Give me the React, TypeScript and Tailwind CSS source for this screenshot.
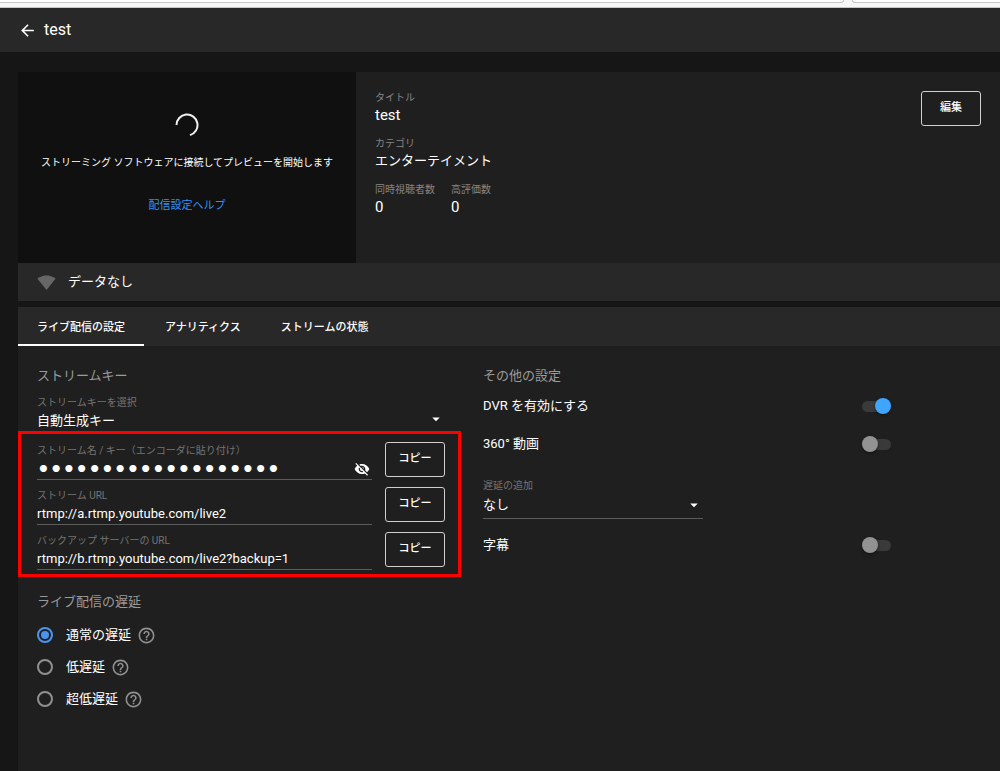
import { useState } from 'react';
import type { ReactNode } from 'react';
import {
  MdArrowBack,
  MdArrowDropDown,
  MdHelpOutline,
  MdSignalWifi4Bar,
  MdVisibilityOff,
} from 'react-icons/md';

const tabs = ['ライブ配信の設定', 'アナリティクス', 'ストリームの状態'];

const latencies = ['通常の遅延', '低遅延', '超低遅延'];

const streamFields = [
  { id: 'key', label: 'ストリーム名 / キー（エンコーダに貼り付け）', value: 'xxxx-xxxx-xxxx-xxxx', secret: true },
  { id: 'url', label: 'ストリーム URL', value: 'rtmp://a.rtmp.youtube.com/live2', secret: false },
  { id: 'backup', label: 'バックアップ サーバーの URL', value: 'rtmp://b.rtmp.youtube.com/live2?backup=1', secret: false },
];

function OutlineButton({ children }: { children: ReactNode }) {
  return (
    <button
      type="button"
      className="h-[35px] w-[60px] shrink-0 rounded-[3px] border border-[#d0d0d0] text-[11px] font-medium text-white"
    >
      {children}
    </button>
  );
}

function SectionTitle({ children }: { children: ReactNode }) {
  return <h2 className="text-[13px] leading-[22px] text-[#9a9a9a]">{children}</h2>;
}

function Stat({ label, value }: { label: string; value: string }) {
  return (
    <div>
      <dt className="text-[10px] leading-4 text-[#858585]">{label}</dt>
      <dd className="text-[15px] leading-[18px]">{value}</dd>
    </div>
  );
}

function SelectField({ id, label, value, roomy }: { id: string; label: string; value: string; roomy?: boolean }) {
  return (
    <div className="flex flex-col border-b border-[#5c5c5c]">
      <label htmlFor={id} className="text-[10px] leading-4 text-[#757575]">
        {label}
      </label>
      <div className={`grid items-center ${roomy ? 'pb-0.5' : 'pb-1'}`}>
        <select
          id={id}
          defaultValue={value}
          className={`col-start-1 row-start-1 w-full appearance-none bg-transparent text-[13px] outline-none ${roomy ? 'h-[22px]' : 'h-4'}`}
        >
          <option className="bg-[#1f1f1f]">{value}</option>
        </select>
        <MdArrowDropDown
          size={18}
          className="pointer-events-none col-start-1 row-start-1 -my-1 justify-self-end"
        />
      </div>
    </div>
  );
}

function Toggle({ label, initial }: { label: string; initial: boolean }) {
  const [on, setOn] = useState(initial);
  return (
    <label className="flex h-[38px] items-center justify-between">
      <span className="text-[13px] leading-5">{label}</span>
      <input
        type="checkbox"
        role="switch"
        checked={on}
        onChange={(e) => setOn(e.target.checked)}
        className="peer sr-only"
      />
      <span className="flex h-[11px] w-[29px] items-center rounded-full bg-[#3a3a3a] peer-checked:justify-end">
        <span
          className={`size-4 shrink-0 rounded-full shadow-[0_1px_3px_rgba(0,0,0,0.5)] ${on ? 'bg-[#3ea6ff]' : 'bg-[#929292]'}`}
        />
      </span>
    </label>
  );
}

function BrowserEdge() {
  return (
    <div className="flex h-2 items-start gap-2 border-b border-[#c8c8c8] bg-[#f7f7f8]">
      <div className="h-[3px] flex-[845] rounded-br-[3px] border-r border-b border-[#c8c8c8] bg-white" />
      <div className="h-[3px] flex-[147] rounded-bl-[3px] border-b border-l border-[#c8c8c8] bg-white" />
    </div>
  );
}

export default function App() {
  const [latency, setLatency] = useState(latencies[0]);

  return (
    <div className="flex min-h-screen flex-col bg-[#161616] font-[Roboto,'Noto_Sans_CJK_JP',sans-serif] text-white">
      <BrowserEdge />
      <header className="flex h-11 items-center gap-[7px] bg-[#282828] pl-[18px]">
        <button type="button" aria-label="戻る">
          <MdArrowBack size={19} />
        </button>
        <h1 className="text-[16px] leading-5">test</h1>
      </header>

      <main className="flex flex-1 flex-col pt-5 pl-[18px]">
        <section>
          <div className="flex h-[191px] bg-[#1f1f1f]">
            <div className="flex w-[338px] shrink-0 flex-col items-center bg-[#101010] pt-[41px]">
              <svg width="24" height="24" viewBox="0 0 24 24" fill="none" stroke="#f1f1f1" strokeWidth="2">
                <path d="M1.5 12A10.5 10.5 0 1 1 15 22.1" />
              </svg>
              <p className="mt-[17px] text-[10px] leading-[18px]">
                ストリーミング ソフトウェアに接続してプレビューを開始します
              </p>
              <a href="#help" className="mt-[25px] text-[11px] leading-[18px] text-[#3690ee]">
                配信設定ヘルプ
              </a>
            </div>
            <dl className="flex flex-1 flex-col gap-3 pt-[18px] pl-[19px]">
              <Stat label="タイトル" value="test" />
              <div>
                <dt className="text-[10px] leading-4 text-[#858585]">カテゴリ</dt>
                <dd className="text-[13px] leading-[18px]">エンターテイメント</dd>
              </div>
              <div className="flex gap-4">
                <Stat label="同時視聴者数" value="0" />
                <Stat label="高評価数" value="0" />
              </div>
            </dl>
            <div className="pt-[19px] pr-[19px]">
              <OutlineButton>編集</OutlineButton>
            </div>
          </div>
          <div className="flex h-[38px] items-center gap-3 bg-[#282828] pl-[19px]">
            <MdSignalWifi4Bar size={19} className="text-[#666]" />
            <span className="text-[13px] leading-5">データなし</span>
          </div>
        </section>

        <section className="mt-1.5 flex flex-1 flex-col bg-[#1f1f1f]">
          <div role="tablist" className="flex h-[39px] gap-0.5 bg-[#282828]">
            {tabs.map((tab, i) => (
              <button
                key={tab}
                type="button"
                role="tab"
                aria-selected={i === 0}
                className="border-b-2 border-transparent px-[19px] pt-1.5 text-[11px] font-medium aria-selected:border-white"
              >
                {tab}
              </button>
            ))}
          </div>

          <div className="grid max-w-[873px] grid-cols-2 gap-x-[38px] pt-[19px] pb-8 pl-[19px]">
            <div>
              <SectionTitle>ストリームキー</SectionTitle>
              <div className="mt-2">
                <SelectField id="stream-key" label="ストリームキーを選択" value="自動生成キー" />
              </div>

              <div className="relative mt-2.5 flex flex-col gap-[7px]">
                {streamFields.map((f) => (
                  <div key={f.id} className="flex items-start gap-[13px]">
                    <div className="flex h-[38px] flex-1 flex-col border-b border-[#5c5c5c]">
                      <label htmlFor={f.id} className="mt-0.5 text-[10px] leading-[14px] text-[#757575]">
                        {f.label}
                      </label>
                      <div className="flex h-[21px] items-center">
                        <input
                          id={f.id}
                          type={f.secret ? 'password' : 'text'}
                          readOnly
                          value={f.value}
                          className={`h-full min-w-0 flex-1 bg-transparent outline-none ${f.secret ? "font-['DejaVu_Sans'] text-[20px] font-bold" : 'text-[13px]'}`}
                        />
                        {f.secret && (
                          <button type="button" aria-label="キーを表示" className="pr-0.5">
                            <MdVisibilityOff size={16} />
                          </button>
                        )}
                      </div>
                    </div>
                    <OutlineButton>コピー</OutlineButton>
                  </div>
                ))}
                <div className="pointer-events-none absolute -top-[11px] -right-4 -bottom-[7px] -left-[19px] border-3 border-[#ff0000]" />
              </div>

              <fieldset className="mt-[21px]">
                <legend className="text-[13px] leading-[22px] text-[#9a9a9a]">ライブ配信の遅延</legend>
                <div className="mt-1.5">
                  {latencies.map((name) => (
                    <div key={name} className="flex h-8 items-center gap-1.5">
                      <label className="flex items-center gap-[13px] text-[13px] leading-5">
                        <input
                          type="radio"
                          name="latency"
                          checked={latency === name}
                          onChange={() => setLatency(name)}
                          className="size-4 appearance-none rounded-full border-2 border-[#909090] bg-clip-content p-0.5 checked:border-[#4a94ee] checked:bg-[#4a94ee]"
                        />
                        {name}
                      </label>
                      <button type="button" aria-label={`${name}のヘルプ`} className="text-[#909090]">
                        <MdHelpOutline size={19} />
                      </button>
                    </div>
                  ))}
                </div>
              </fieldset>
            </div>

            <div>
              <SectionTitle>その他の設定</SectionTitle>
              <Toggle label="DVR を有効にする" initial />
              <Toggle label="360° 動画" initial={false} />
              <div className="mt-[15px] mb-[7px] w-[220px]">
                <SelectField id="delay" label="遅延の追加" value="なし" roomy />
              </div>
              <Toggle label="字幕" initial={false} />
            </div>
          </div>
        </section>
      </main>
    </div>
  );
}
